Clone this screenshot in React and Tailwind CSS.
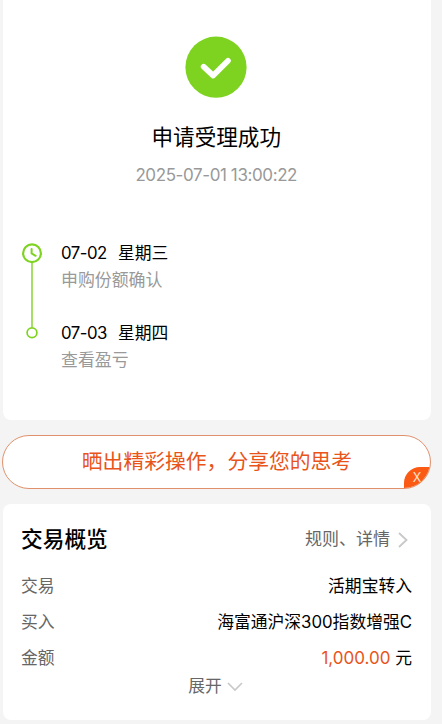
const steps = [
    { date: "07-02", day: "星期三", text: "申购份额确认" },
    { date: "07-03", day: "星期四", text: "查看盈亏" },
];

const SuccessIcon = () => (
    <svg width="62" height="62" viewBox="0 0 62 62" fill="none">
        <circle cx="31" cy="31.2" r="30.6" fill="#7ed321" />
        <path
            d="M18.6 30.6 L28.2 39.6 L43 24.8"
            stroke="#fff"
            strokeWidth="5.6"
            strokeLinecap="round"
            strokeLinejoin="round"
        />
    </svg>
);

const TimelineRail = () => (
    <svg width="22" height="100" viewBox="0 0 22 100" fill="none" stroke="#7ed321" className="shrink-0">
        <circle cx="11" cy="11.3" r="8.9" strokeWidth="2.2" />
        <path d="M10.6 7 V11.4 L14.6 13.8" strokeWidth="2" strokeLinecap="round" strokeLinejoin="round" />
        <path d="M11 20.5 V85.5" strokeWidth="1.4" />
        <circle cx="11" cy="90.8" r="4.9" strokeWidth="1.7" />
    </svg>
);

const ResultCard = () => (
    <div className="h-[420px] rounded-b-lg bg-white pt-9">
        <div className="flex flex-col items-center pr-px">
            <SuccessIcon />
            <h1 className="mt-6 text-[21.6px] leading-[30px] text-black">申请受理成功</h1>
            <p className="mt-[11px] text-[17px] leading-6 tracking-[-0.4px] text-[#999]">2025-07-01 13:00:22</p>
        </div>

        <div className="mt-[53px] flex pl-[18px]">
            <div className="pt-[2px]">
                <TimelineRail />
            </div>
            <div className="ml-[18.5px] flex flex-col gap-[27px]">
                {steps.map((step) => (
                    <div key={step.date}>
                        <div className="flex text-[16.8px] leading-[26px] text-black">
                            <span className="w-[57px] tracking-[-0.5px]">{step.date}</span>
                            <span>{step.day}</span>
                        </div>
                        <div className="mt-px text-[16.9px] leading-[26px] text-[#999]">{step.text}</div>
                    </div>
                ))}
            </div>
        </div>
    </div>
);

const ShareBanner = () => (
    <div className="relative mt-[15px] -ml-[0.5px] flex h-[54px] items-center justify-center overflow-hidden rounded-full border border-[#e0916c] bg-white text-[20.8px] text-[#e8541a]">
        <span className="pl-px">晒出精彩操作，分享您的思考</span>
        <button
            aria-label="关闭"
            className="absolute -right-px -bottom-px flex h-[22px] w-[27px] items-center justify-center rounded-tl-[16px] bg-[#fa5a14] pr-px text-[12.5px] text-[#ffe3d3]"
        >
            X
        </button>
    </div>
);

const Row = ({ label, children }) => (
    <div className="flex h-9 items-center justify-between text-[16.8px]">
        <span className="text-[#666]">{label}</span>
        <span className="text-black">{children}</span>
    </div>
);

const OverviewCard = () => (
    <div className="mt-[15px] h-[216px] rounded-lg bg-white pt-5 pr-[19px] pl-[18.5px]">
        <div className="flex h-[30px] items-center justify-between">
            <h2 className="text-[21.7px] font-medium text-black">交易概览</h2>
            <div className="flex items-center pt-px text-[17px] text-[#666]">
                <span>规则、详情</span>
                <svg width="10" height="16" viewBox="0 0 10 16" fill="none" className="mr-[4px] ml-[8px]">
                    <path d="M1 1 L8.5 8 L1 15" stroke="#c8c8c8" strokeWidth="1.8" />
                </svg>
            </div>
        </div>

        <div className="mt-[15px]">
            <Row label="交易">活期宝转入</Row>
            <Row label="买入">海富通沪深300指数增强C</Row>
            <Row label="金额">
                <span className="text-[17px] text-[#e8541a]">1,000.00</span> 元
            </Row>
        </div>

        <div className="flex h-5 items-center justify-center pr-[2px] text-[16.8px] text-[#666]">
            <span>展开</span>
            <svg width="16" height="10" viewBox="0 0 16 10" fill="none" className="ml-[5px]">
                <path d="M1 1 L8 8 L15 1" stroke="#c8c8c8" strokeWidth="1.6" />
            </svg>
        </div>
    </div>
);

const App = () => (
    <div className="h-[724px] w-[442px] overflow-hidden bg-[#f4f4f4] pr-[11px] pl-[2.5px] font-['Inter','Noto_Sans_CJK_SC',sans-serif]">
        <ResultCard />
        <ShareBanner />
        <OverviewCard />
    </div>
);

export default App;
